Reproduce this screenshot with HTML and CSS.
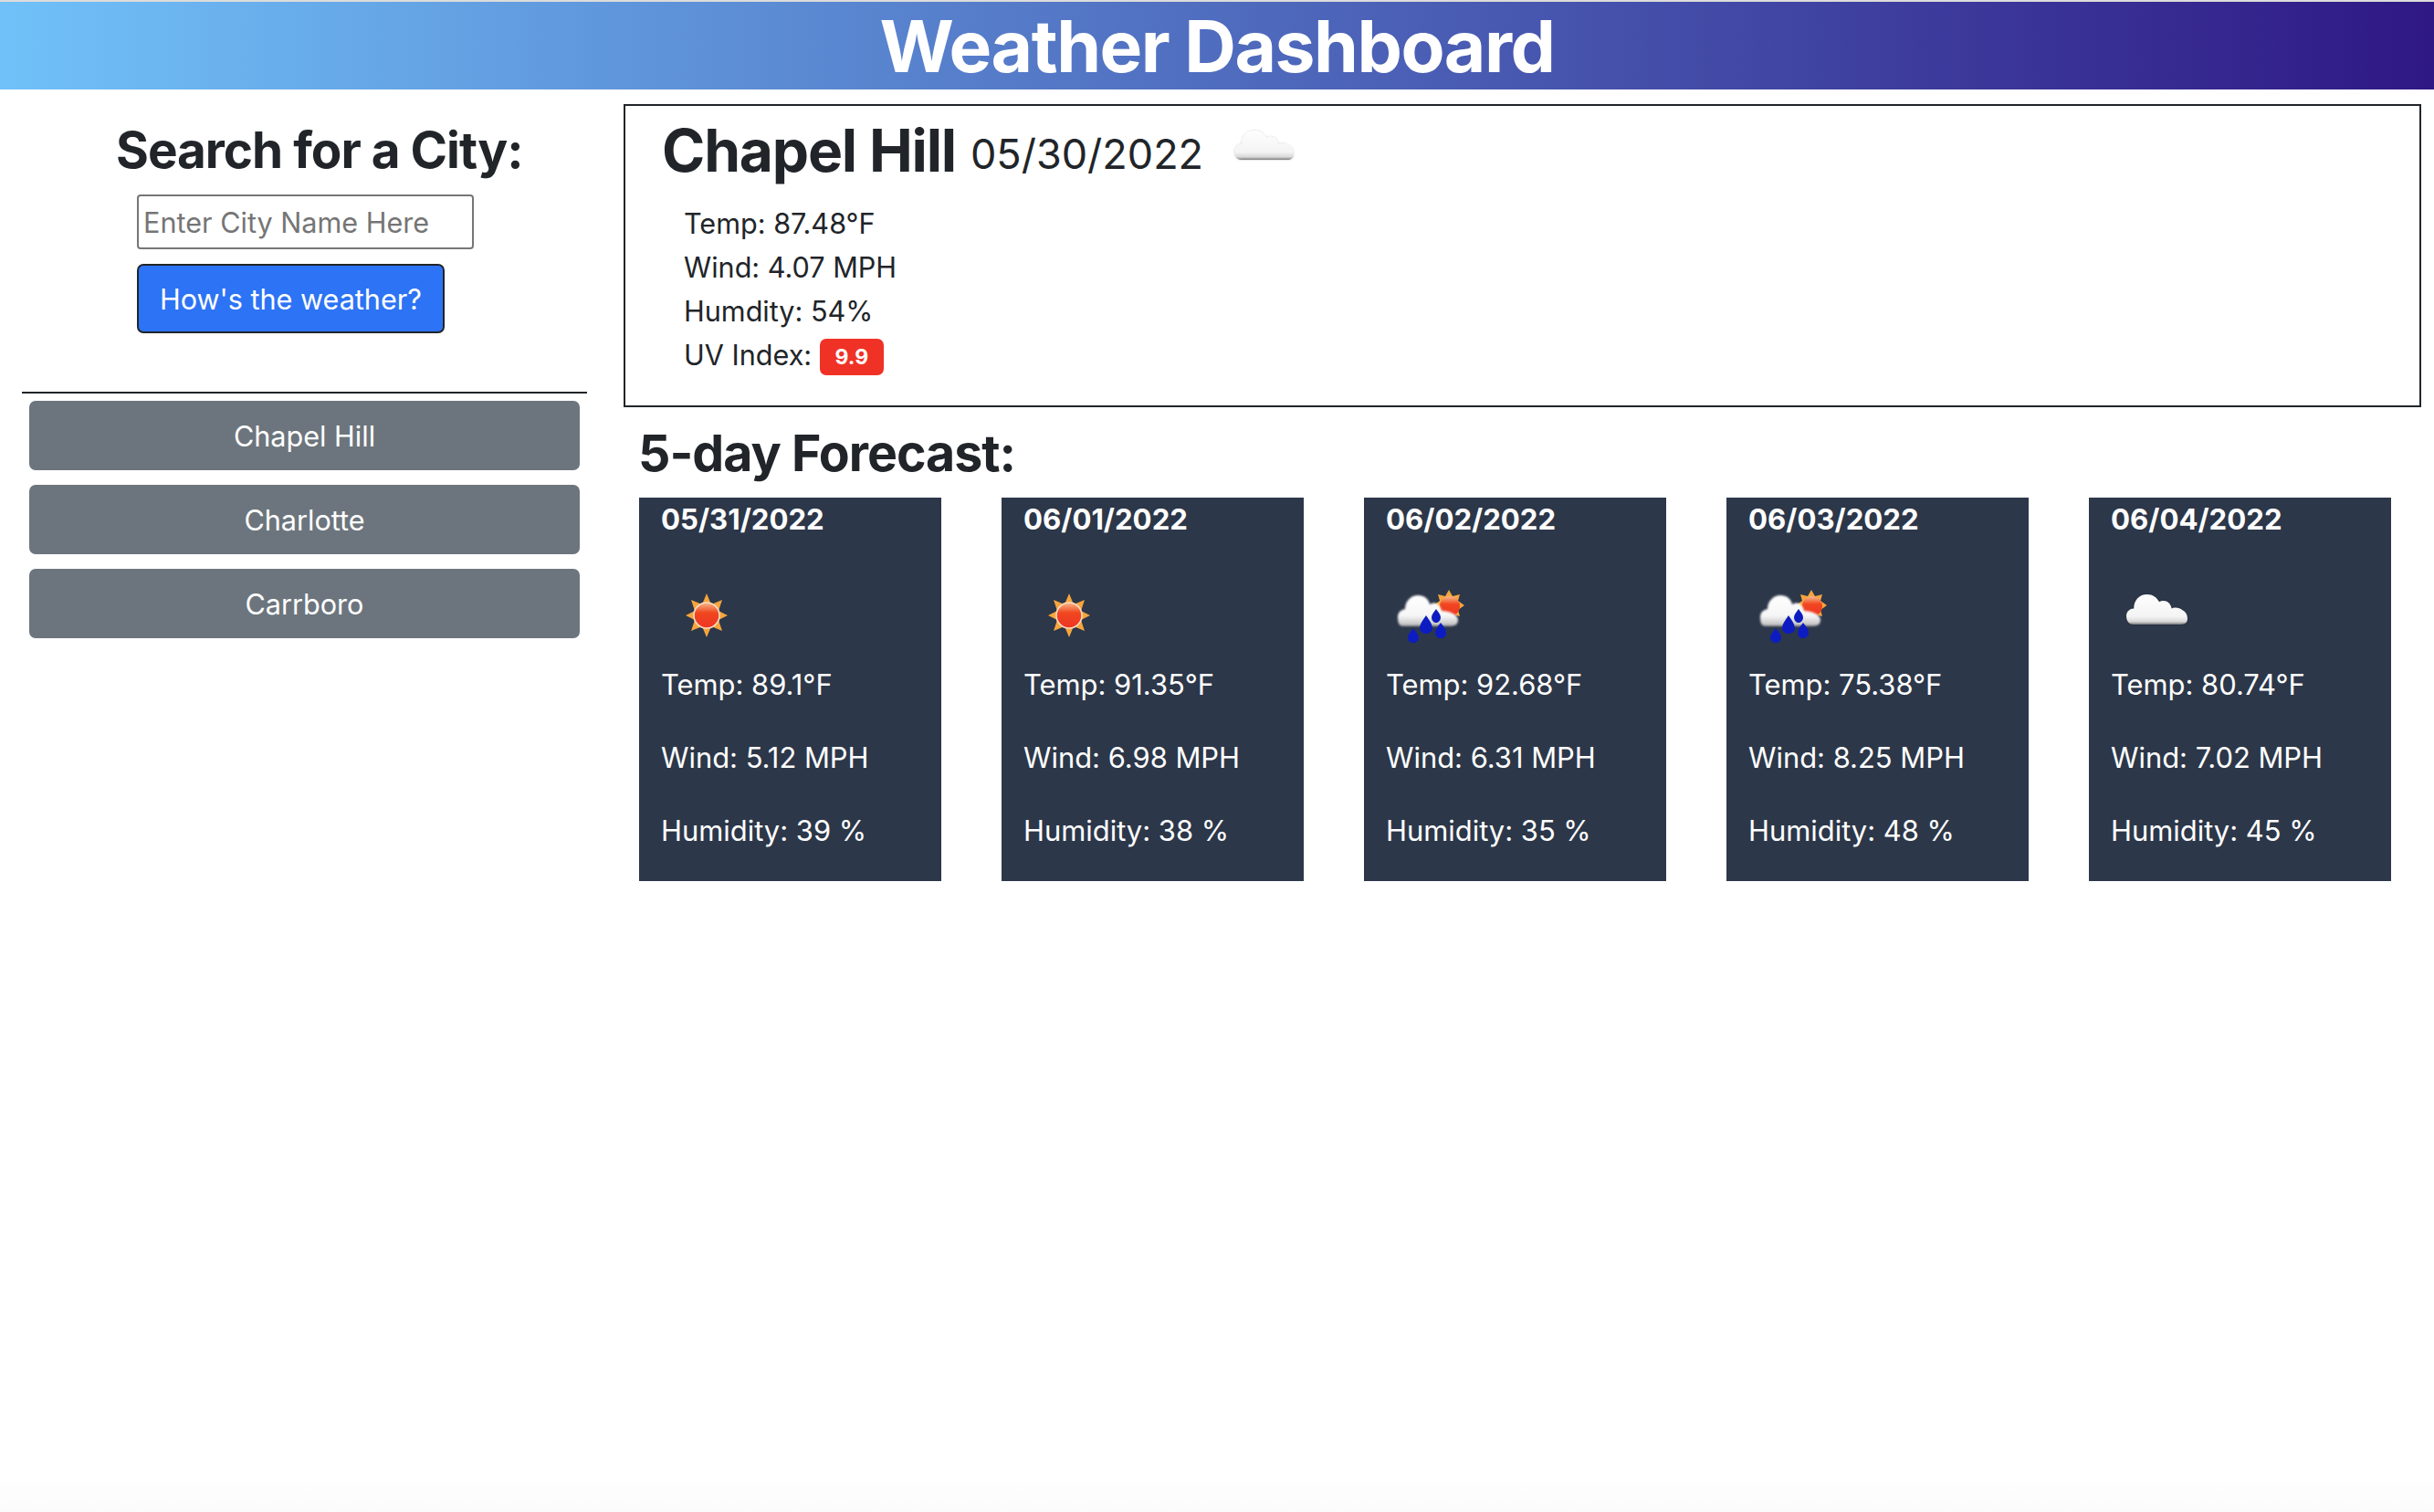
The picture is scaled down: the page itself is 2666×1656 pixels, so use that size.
FILE: index.html
```html
<!DOCTYPE html>
<html lang="en">
<head>
  <meta charset="UTF-8">
  <meta name="viewport" content="width=device-width, initial-scale=1.0">
  <title>Weather Dashboard</title>
  <link rel="stylesheet" href="styles.css">
</head>
<body>
  <!-- Shared icon drawings -->
  <svg class="icon-defs" aria-hidden="true">
    <defs>
      <linearGradient id="cloudFill" gradientUnits="userSpaceOnUse" x1="0" y1="0" x2="0" y2="38">
        <stop offset="0" stop-color="#ffffff"/>
        <stop offset="0.7" stop-color="#f4f4f4"/>
        <stop offset="0.84" stop-color="#d8d8d8"/>
        <stop offset="0.92" stop-color="#7d7d7d"/>
        <stop offset="1" stop-color="#8a8a8a"/>
      </linearGradient>
      <linearGradient id="rainCloudFill" gradientUnits="userSpaceOnUse" x1="0" y1="20" x2="0" y2="56">
        <stop offset="0" stop-color="#ffffff"/>
        <stop offset="0.65" stop-color="#f6f6f6"/>
        <stop offset="0.9" stop-color="#c9c9c9"/>
        <stop offset="1" stop-color="#6f7275"/>
      </linearGradient>
      <linearGradient id="sunFill" x1="0" y1="0" x2="0" y2="1">
        <stop offset="0" stop-color="#f7b98a"/>
        <stop offset="0.4" stop-color="#f0461f"/>
        <stop offset="1" stop-color="#ee3523"/>
      </linearGradient>
      <filter id="soft" x="-20%" y="-20%" width="140%" height="140%">
        <feGaussianBlur stdDeviation="0.7"/>
      </filter>
      <filter id="softer" x="-20%" y="-20%" width="140%" height="140%">
        <feGaussianBlur stdDeviation="1"/>
      </filter>
      <filter id="softEdge" x="-20%" y="-20%" width="140%" height="140%">
        <feDropShadow dx="0" dy="0" stdDeviation="1.2" flood-color="#000" flood-opacity="0.22"/>
        <feGaussianBlur stdDeviation="0.6"/>
      </filter>

      <symbol id="icon-sun" viewBox="0 0 85 85">
        <g filter="url(#soft)">
          <path fill="#f5a53c" d="M48 19 L53 31 L65 26 L61 38 L71 43 L61 48 L65 60 L53 55 L48 67 L43 55 L31 60 L35 48 L25 43 L35 38 L31 26 L43 31 Z"/>
          <circle cx="48" cy="43" r="14" fill="url(#sunFill)" stroke="#f8dcc4" stroke-width="1.6"/>
        </g>
      </symbol>

      <symbol id="icon-cloud" viewBox="0 0 67 38">
        <g filter="url(#softEdge)" fill="url(#cloudFill)">
          <path d="M9 35 C3 35 1 30 1 26 C1 21 5 18 9 18 C9 9 15 3 23 3 C29 3 33 6 36 11 C39 9 44 9 47 13 C48 15 49 16 49 18 C52 16 58 17 61 20 C65 22 66 26 66 29 C66 33 63 35 59 35 Z"/>
        </g>
      </symbol>

      <symbol id="icon-rain" viewBox="0 0 85 85">
        <g filter="url(#soft)">
          <path fill="#f5a53c" d="M68 15 L72 22 L80 20 L78 27 L85 32 L78 37 L80 44 L72 42 L68 50 L64 42 L56 44 L58 37 L51 32 L58 27 L56 20 L64 22 Z"/>
          <circle cx="69" cy="33" r="11" fill="url(#sunFill)"/>
        </g>
        <path filter="url(#softer)" fill="url(#rainCloudFill)" d="M18 55 C13 55 12 50 12 45 C12 40 15 37 20 36 C20 27 27 21 34 21 C41 21 46 25 47 31 C51 28 58 29 60 38 C66 38 78 41 78 48 C78 53 74 55 70 55 Z"/>
        <g filter="url(#soft)" fill="#0b1fc0">
          <path d="M29 57 C32 61 35 64 35 67 C35 71 32 73 29 73 C26 73 23 71 23 67 C23 64 26 61 29 57 Z"/>
          <path d="M43 43 C46 48 50 52 50 57 C50 61 46 63 43 63 C40 63 36 61 36 57 C36 52 40 48 43 43 Z"/>
          <path d="M54 36 C56 39 59 42 59 45 C59 49 56 51 54 51 C52 51 49 49 49 45 C49 42 52 39 54 36 Z"/>
          <path d="M59 51 C62 55 65 58 65 62 C65 66 62 68 59 68 C56 68 53 66 53 62 C53 58 56 55 59 51 Z"/>
        </g>
      </symbol>
    </defs>
  </svg>

  <header class="banner">
    <h1>Weather Dashboard</h1>
  </header>

  <div class="layout">
    <aside class="sidebar">
      <h2 class="search-title">Search for a City:</h2>
      <form class="search-form">
        <input class="search-input" type="text" placeholder="Enter City Name Here">
        <button class="search-btn" type="button">How's the weather?</button>
      </form>
      <hr class="divider">
      <div class="history">
        <button class="history-btn" type="button">Chapel Hill</button>
        <button class="history-btn" type="button">Charlotte</button>
        <button class="history-btn" type="button">Carrboro</button>
      </div>
    </aside>

    <main class="content">
      <section class="today">
        <div class="today-head">
          <h2 class="today-city">Chapel Hill</h2>
          <span class="today-date">05/30/2022</span>
          <svg class="today-icon"><use href="#icon-cloud"/></svg>
        </div>
        <div class="today-stats">
          <div class="stat">Temp: 87.48°F</div>
          <div class="stat">Wind: 4.07 MPH</div>
          <div class="stat">Humdity: 54%</div>
          <div class="stat">UV Index: <span class="uv-badge">9.9</span></div>
        </div>
      </section>

      <h3 class="forecast-title">5-day Forecast:</h3>
      <div class="forecast">
        <article class="day-card">
          <h5 class="day-date">05/31/2022</h5>
          <svg class="day-icon day-sun"><use href="#icon-sun"/></svg>
          <p>Temp: 89.1°F</p>
          <p>Wind: 5.12 MPH</p>
          <p>Humidity: 39 %</p>
        </article>
        <article class="day-card">
          <h5 class="day-date">06/01/2022</h5>
          <svg class="day-icon day-sun"><use href="#icon-sun"/></svg>
          <p>Temp: 91.35°F</p>
          <p>Wind: 6.98 MPH</p>
          <p>Humidity: 38 %</p>
        </article>
        <article class="day-card">
          <h5 class="day-date">06/02/2022</h5>
          <svg class="day-icon"><use href="#icon-rain"/></svg>
          <p>Temp: 92.68°F</p>
          <p>Wind: 6.31 MPH</p>
          <p>Humidity: 35 %</p>
        </article>
        <article class="day-card">
          <h5 class="day-date">06/03/2022</h5>
          <svg class="day-icon"><use href="#icon-rain"/></svg>
          <p>Temp: 75.38°F</p>
          <p>Wind: 8.25 MPH</p>
          <p>Humidity: 48 %</p>
        </article>
        <article class="day-card">
          <h5 class="day-date">06/04/2022</h5>
          <div class="day-icon-box">
            <svg class="day-cloud"><use href="#icon-cloud"/></svg>
          </div>
          <p>Temp: 80.74°F</p>
          <p>Wind: 7.02 MPH</p>
          <p>Humidity: 45 %</p>
        </article>
      </div>
    </main>
  </div>
</body>
</html>
```

FILE: styles.css
```css
* {
  box-sizing: border-box;
}

body {
  margin: 0;
  min-height: 100vh;
  font-family: Inter, "Noto Sans", sans-serif;
  font-size: 30.6px;
  color: #212529;
  background: linear-gradient(to bottom, #fff calc(100% - 40px), #fbfbfb);
}

.icon-defs {
  display: block;
  width: 0;
  height: 0;
}

.banner {
  height: 98px;
  padding-top: 2px;
  border-top: 2px solid #dcdcdc;
  background: linear-gradient(to right, #70c1f9, #2f1884);
  display: flex;
  justify-content: center;
  align-items: center;
}

.banner h1 {
  margin: 0;
  font-size: 78.5px;
  font-weight: 700;
  line-height: 94px;
  letter-spacing: -1.5px;
  color: #fff;
}

.layout {
  display: flex;
}

/* left column */
.sidebar {
  width: 683px;
  flex-shrink: 0;
  padding: 0 40px 0 24px;
}

.search-title {
  margin: 34px 0 0 103px;
  font-size: 54.8px;
  font-weight: 700;
  line-height: 65px;
  letter-spacing: -1px;
}

.search-form {
  margin: 16px 0 0 126px;
  display: flex;
  flex-direction: column;
  align-items: flex-start;
  gap: 16px;
}

.search-input {
  width: 369px;
  height: 60px;
  padding: 0 5px;
  border: 2px solid #767676;
  border-radius: 4px;
  font-family: inherit;
  font-size: 30.6px;
  color: #212529;
}

.search-input::placeholder {
  color: #757575;
  opacity: 1;
}

.search-btn {
  width: 337px;
  height: 76px;
  padding: 0;
  border: 2px solid #212529;
  border-radius: 7px;
  background-color: #2d73f5;
  color: #fff;
  font-family: inherit;
  font-size: 30.6px;
}

.divider {
  margin: 64px 0 8px;
  height: 2px;
  border: none;
  background-color: #212529;
}

.history {
  display: flex;
  flex-direction: column;
  gap: 16px;
  padding: 0 8px;
}

.history-btn {
  height: 76px;
  border: none;
  border-radius: 7px;
  background-color: #6c757d;
  color: #fff;
  font-family: inherit;
  font-size: 30.6px;
}

/* right column */
.content {
  flex: 1;
  padding: 16px 14px 0 0;
}

.today {
  height: 332px;
  border: 2px solid #212529;
  padding: 0 0 0 40px;
}

.today-head {
  display: flex;
  align-items: flex-start;
  height: 92px;
}

.today-city {
  margin: 11px 0 0;
  font-size: 64px;
  font-weight: 700;
  line-height: 76px;
  letter-spacing: -1.2px;
}

.today-date {
  margin: 24px 0 0 16px;
  font-size: 45px;
  line-height: 57px;
}

.today-icon {
  width: 67px;
  height: 38px;
  margin: 24px 0 0 33px;
}

.today-stats {
  padding: 12.5px 0 0 24px;
}

.stat {
  line-height: 48px;
}

.uv-badge {
  display: inline-block;
  width: 70px;
  height: 40px;
  border-radius: 7px;
  background-color: #f03226;
  color: #fff;
  font-size: 23px;
  font-weight: 700;
  line-height: 40px;
  text-align: center;
  vertical-align: 1px;
}

.forecast-title {
  margin: 16.5px 0 0 16px;
  font-size: 55.4px;
  font-weight: 700;
  line-height: 65px;
  letter-spacing: -1px;
}

.forecast {
  display: flex;
  gap: 66px;
  margin: 17.5px 0 0 17px;
}

.day-card {
  width: 331px;
  height: 420px;
  padding: 4px 24px 0;
  background-color: #2c3749;
  color: #fff;
}

.day-date {
  margin: 0 0 41px;
  font-size: 31.2px;
  font-weight: 700;
  line-height: 41px;
}

.day-icon,
.day-icon-box {
  display: block;
  width: 85px;
  height: 85px;
  margin: 0 0 13px 1px;
}

.day-icon.day-sun {
  margin-left: 2px;
}

.day-icon-box {
  padding: 16px 0 0 15px;
}

.day-cloud {
  display: block;
  width: 69px;
  height: 41px;
}

.day-card p {
  margin: 0 0 39px;
  font-size: 30.9px;
  line-height: 41px;
}
```
